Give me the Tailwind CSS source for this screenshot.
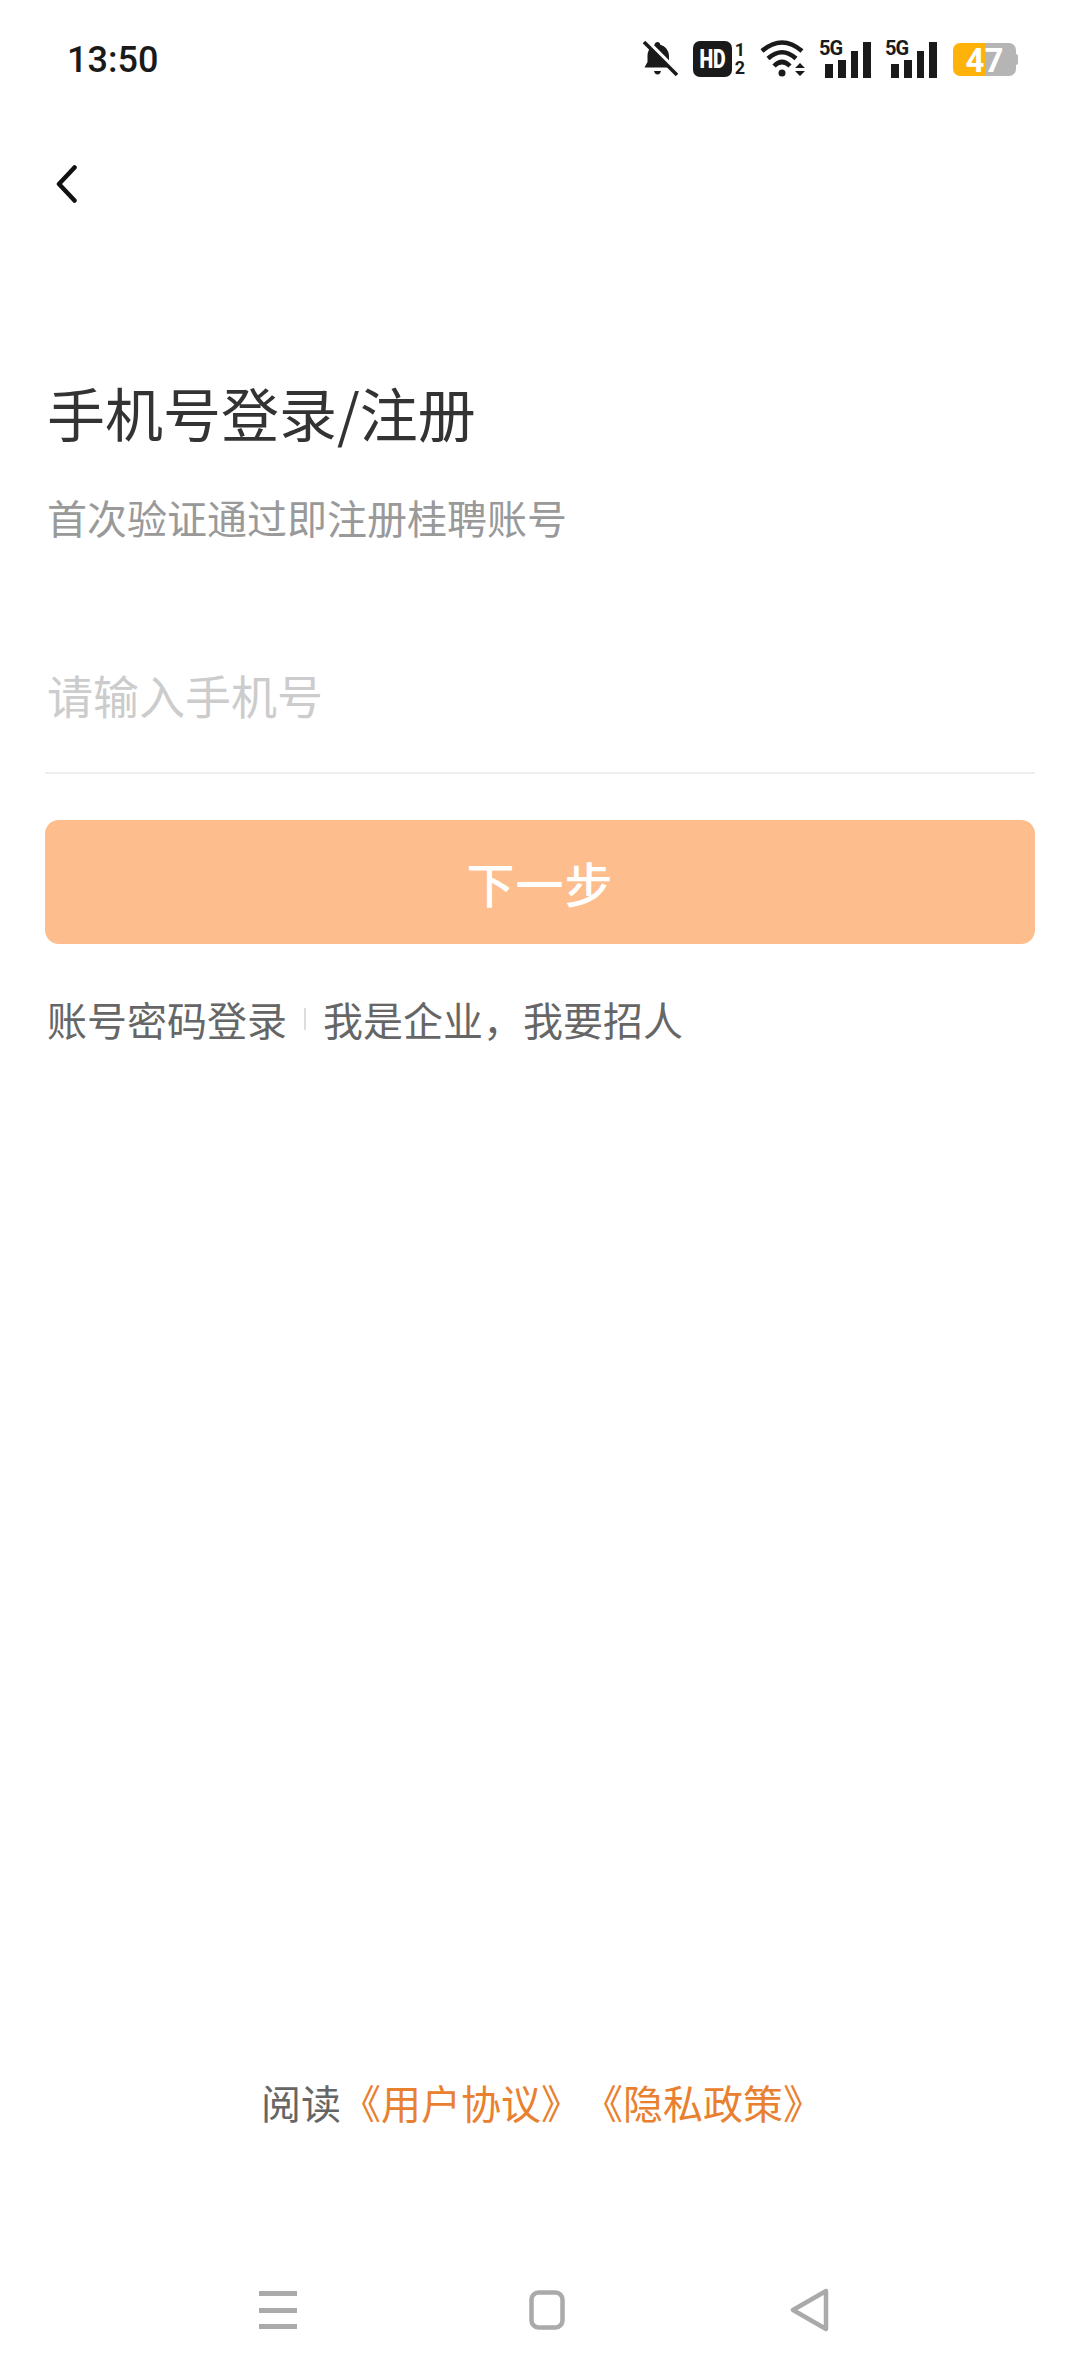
<!DOCTYPE html>
<html lang="zh-CN">
  <head>
    <meta charset="UTF-8" />
    <meta name="viewport" content="width=device-width, initial-scale=1.0" />
    <title>手机号登录</title>
    <script src="https://cdn.jsdelivr.net/npm/@tailwindcss/browser@4"></script>
  </head>
  <body class="bg-white">
    <div class="w-[1080px] h-[2376px] flex flex-col font-['Noto_Sans_CJK_SC',sans-serif] overflow-hidden">
      <!-- Status bar -->
      <div class="h-[120px] shrink-0 flex items-start justify-between pt-[40px] pl-[67px] pr-[62px]">
        <span class="mt-[1px] font-['Roboto',sans-serif] font-medium text-[36px] leading-[38px] text-[#1a1a1a]">13:50</span>
        <div class="flex items-start text-[#1a1a1a] font-['Roboto',sans-serif]">
          <!-- muted bell -->
          <svg class="mt-[1px]" width="35" height="36" viewBox="0 0 35 36">
            <path d="M14.500 1c1.500 0 2.500 1 2.800 2.800C22.300 5.300 26 9.500 26 15v6l2.500 5.500H1.500L4.500 21v-6c0-4.500 2.500-9.500 7-11.200C12 2 13 1 14.500 1z" fill="#1a1a1a" />
            <path d="M11 30h7c-.5 2.500-2 3.500-3.500 3.500S11.500 32.500 11 30z" fill="#1a1a1a" />
            <path d="M3 -1l33 33" stroke="#fff" stroke-width="4" />
            <path d="M1 1l33 33" stroke="#1a1a1a" stroke-width="3.500" />
          </svg>
          <!-- HD voice, both sims -->
          <div class="ml-[15px] mt-[1px] flex items-start">
            <span class="w-[39px] h-[36px] rounded-[7px] bg-[#1a1a1a] text-white text-center font-black text-[26px] leading-[36px]">
              <span class="inline-block scale-x-[0.75]">HD</span>
            </span>
            <span class="ml-[3px] w-[10px] flex flex-col items-center font-bold text-[18px] leading-[18px]"><span>1</span><span>2</span></span>
          </div>
          <!-- wifi with up/down arrows -->
          <svg class="ml-[15px]" width="46" height="38" viewBox="0 0 46 38" fill="none" stroke="#1a1a1a" stroke-width="4.500">
            <path d="M2 11Q22 -6 42 11" />
            <path d="M8 18.500Q22 6 36 18.500" />
            <path d="M14 26Q22 18 30 26" />
            <circle cx="22" cy="33" r="3.500" fill="#1a1a1a" stroke="none" />
            <path d="M35 28h10l-5-5zM35 31h10l-5 5z" fill="#1a1a1a" stroke="none" />
          </svg>
          <!-- cellular, sim 1 -->
          <div class="relative ml-[13px] w-[52px] h-[38px]">
            <span class="absolute left-0 top-[-3px] font-bold text-[20px] leading-[22px] tracking-[-1px]">5G</span>
            <div class="absolute inset-0 flex items-end gap-[5px] pl-[6px]">
              <span class="w-[8px] h-[14px] bg-[#1a1a1a]"></span>
              <span class="w-[8px] h-[18px] bg-[#1a1a1a]"></span>
              <span class="w-[8px] h-[27px] bg-[#1a1a1a]"></span>
              <span class="w-[8px] h-[36px] bg-[#1a1a1a]"></span>
            </div>
          </div>
          <!-- cellular, sim 2 -->
          <div class="relative ml-[14px] w-[52px] h-[38px]">
            <span class="absolute left-0 top-[-3px] font-bold text-[20px] leading-[22px] tracking-[-1px]">5G</span>
            <div class="absolute inset-0 flex items-end gap-[5px] pl-[6px]">
              <span class="w-[8px] h-[14px] bg-[#1a1a1a]"></span>
              <span class="w-[8px] h-[18px] bg-[#1a1a1a]"></span>
              <span class="w-[8px] h-[27px] bg-[#1a1a1a]"></span>
              <span class="w-[8px] h-[36px] bg-[#1a1a1a]"></span>
            </div>
          </div>
          <!-- battery -->
          <div class="ml-[16px] mt-[3px] flex items-center">
            <div class="relative w-[63px] h-[33px]">
              <div class="w-full h-full rounded-[7px] overflow-hidden flex">
                <div class="w-[32px] bg-[#ffb30a]"></div>
                <div class="flex-1 bg-[#b5b5b5]"></div>
              </div>
              <span class="absolute inset-0 text-center font-bold text-[33px] leading-[35px] text-white">47</span>
            </div>
            <div class="w-[2px] h-[11px] bg-[#b5b5b5] rounded-r-[2px]"></div>
          </div>
        </div>
      </div>

      <!-- Back -->
      <div class="mt-[34px] h-[60px] pl-[56px] flex items-center">
        <svg width="21" height="38" viewBox="0 0 21 38" fill="none" stroke="#111" stroke-width="4.500" stroke-linecap="round" stroke-linejoin="round">
          <path d="M18.500 2.500L3 19l15.500 16.500" />
        </svg>
      </div>

      <!-- Login form -->
      <div class="px-[45px] flex flex-col">
        <h1 class="mt-[162px] pl-[2px] text-[58px] leading-[72px] font-normal text-[#333333] whitespace-nowrap">手机号登录/注册</h1>
        <p class="mt-[41px] pl-[2px] text-[40px] leading-[56px] text-[#999999]">首次验证通过即注册桂聘账号</p>
        <div class="mt-[117px] h-[112px] pl-[2px] border-b-2 border-[#eeeeee] text-[46px] leading-[64px] text-[#cccccc]">请输入手机号</div>
        <button class="mt-[46px] h-[124px] rounded-[14px] bg-[#fdbd8d] text-white font-medium text-[48px] leading-[124px] tracking-[1px]">下一步</button>
        <div class="mt-[47px] flex items-center text-[40px] leading-[56px] text-[#666666]">
          <span class="pl-[2px]">账号密码登录</span>
          <span class="ml-[17px] w-[2px] h-[22px] bg-[#dddddd]"></span>
          <span class="ml-[17px]">我是企业，我要招人</span>
        </div>
      </div>

      <!-- Agreement links -->
      <div class="mt-auto pl-[4px] text-center text-[40px] leading-[56px] text-[#666666]">
        阅读<span class="text-[#e98030]">《用户协议》<span class="ml-[22px]">《隐私政策》</span></span>
      </div>

      <!-- Navigation bar -->
      <div class="mt-[150px] h-[96px] shrink-0 flex items-start pt-[10px] pl-[259px]">
        <svg width="38" height="40" viewBox="0 0 38 40" fill="#aaaaaa">
          <rect y="1" width="38" height="5" />
          <rect y="18" width="38" height="5" />
          <rect y="34" width="38" height="5" />
        </svg>
        <svg class="ml-[232px]" width="36" height="40" viewBox="0 0 36 40" fill="none" stroke="#aaaaaa" stroke-width="4.500">
          <rect x="2.500" y="2.500" width="31" height="35" rx="7" />
        </svg>
        <svg class="ml-[225px] mt-[-2px]" width="40" height="44" viewBox="0 0 40 44" fill="none" stroke="#aaaaaa" stroke-width="4.500" stroke-linejoin="round">
          <path d="M36 3L3 22l33 19z" />
        </svg>
      </div>
    </div>
  </body>
</html>
